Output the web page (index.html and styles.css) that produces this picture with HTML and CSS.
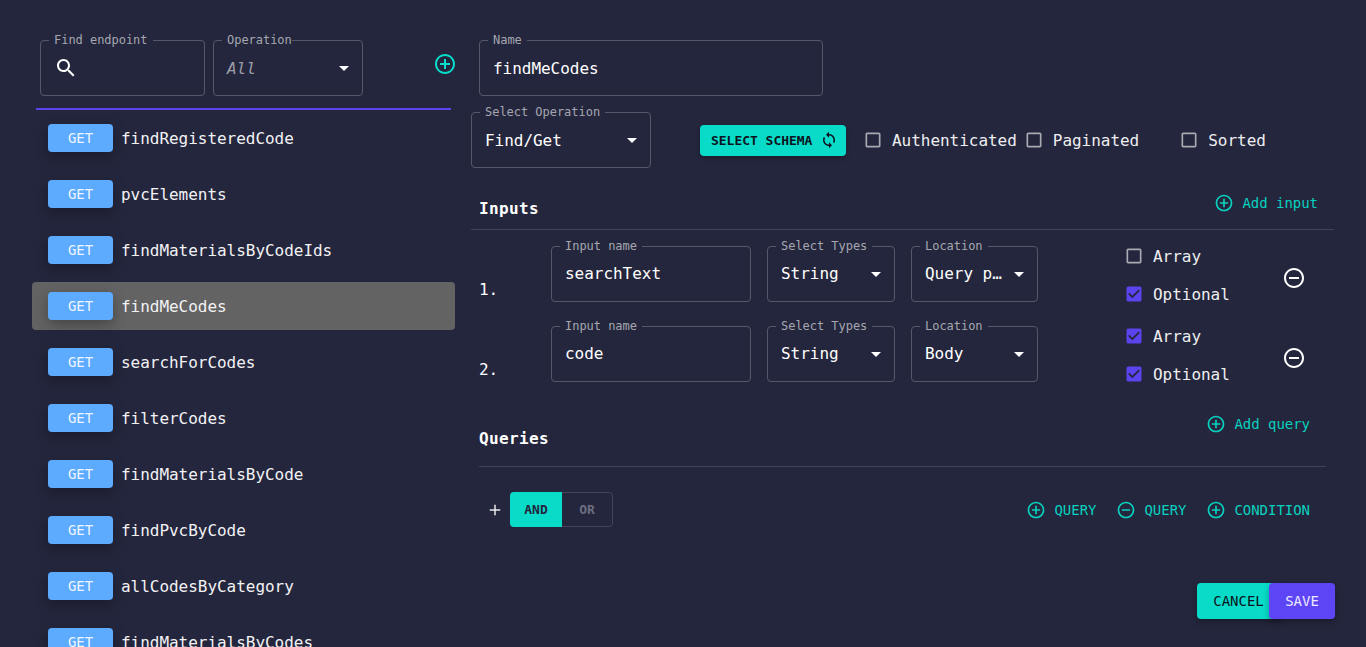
FILE: index.html
```html
<!DOCTYPE html>
<html lang="en">
<head>
    <meta charset="UTF-8">
    <meta name="viewport" content="width=device-width, initial-scale=1.0">
    <title>Endpoints</title>
    <link rel="stylesheet" href="styles.css">
</head>
<body>
    <svg class="sprites" aria-hidden="true">
        <symbol id="i-add" viewBox="0 0 24 24"><path d="M13 7h-2v4H7v2h4v4h2v-4h4v-2h-4V7zm-1-5C6.48 2 2 6.48 2 12s4.48 10 10 10 10-4.48 10-10S17.52 2 12 2zm0 18c-4.41 0-8-3.59-8-8s3.59-8 8-8 8 3.59 8 8-3.59 8-8 8z"/></symbol>
        <symbol id="i-remove" viewBox="0 0 24 24"><path d="M7 11v2h10v-2H7zm5-9C6.48 2 2 6.48 2 12s4.48 10 10 10 10-4.48 10-10S17.52 2 12 2zm0 18c-4.41 0-8-3.59-8-8s3.59-8 8-8 8 3.59 8 8-3.59 8-8 8z"/></symbol>
        <symbol id="i-search" viewBox="0 0 24 24"><path d="M15.5 14h-.79l-.28-.27C15.41 12.59 16 11.11 16 9.5 16 5.91 13.09 3 9.5 3S3 5.91 3 9.5 5.91 16 9.5 16c1.61 0 3.09-.59 4.23-1.57l.27.28v.79l5 4.99L20.49 19l-4.99-5zm-6 0C7.01 14 5 11.99 5 9.5S7.01 5 9.5 5 14 7.01 14 9.5 11.99 14 9.5 14z"/></symbol>
        <symbol id="i-sync" viewBox="0 0 24 24"><path d="M12 4V1L8 5l4 4V6c3.31 0 6 2.69 6 6 0 1.01-.25 1.97-.7 2.8l1.46 1.46C19.54 15.03 20 13.57 20 12c0-4.42-3.58-8-8-8zm0 14c-3.31 0-6-2.69-6-6 0-1.01.25-1.97.7-2.8L5.24 7.74C4.46 8.97 4 10.43 4 12c0 4.42 3.58 8 8 8v3l4-4-4-4v3z"/></symbol>
        <symbol id="i-drop" viewBox="0 0 24 24"><path d="M7 10l5 5 5-5z"/></symbol>
        <symbol id="i-plus" viewBox="0 0 24 24"><path d="M19 13h-6v6h-2v-6H5v-2h6V5h2v6h6v2z"/></symbol>
        <symbol id="i-box" viewBox="0 0 24 24"><path d="M19 5v14H5V5h14m0-2H5c-1.1 0-2 .9-2 2v14c0 1.1.9 2 2 2h14c1.1 0 2-.9 2-2V5c0-1.1-.9-2-2-2z"/></symbol>
        <symbol id="i-checked" viewBox="0 0 24 24"><path d="M19 3H5c-1.11 0-2 .9-2 2v14c0 1.1.89 2 2 2h14c1.11 0 2-.9 2-2V5c0-1.1-.89-2-2-2zm-9 14l-5-5 1.41-1.41L10 14.17l7.59-7.59L19 8l-9 9z"/></symbol>
    </svg>

    <div class="page">
        <aside class="sidebar">
            <div class="filters">
                <div class="field field-find">
                    <span class="field-label">Find endpoint</span>
                    <svg class="icon-24 search-icon"><use href="#i-search"/></svg>
                </div>
                <div class="field field-operation">
                    <span class="field-label label-tight">Operation</span>
                    <span class="field-value placeholder">All</span>
                    <svg class="icon-24 drop"><use href="#i-drop"/></svg>
                </div>
                <svg class="icon-24 teal new-endpoint"><use href="#i-add"/></svg>
            </div>
            <ul class="endpoints">
                <li class="endpoint"><span class="badge">GET</span>findRegisteredCode</li>
                <li class="endpoint"><span class="badge">GET</span>pvcElements</li>
                <li class="endpoint"><span class="badge">GET</span>findMaterialsByCodeIds</li>
                <li class="endpoint selected"><span class="badge">GET</span>findMeCodes</li>
                <li class="endpoint"><span class="badge">GET</span>searchForCodes</li>
                <li class="endpoint"><span class="badge">GET</span>filterCodes</li>
                <li class="endpoint"><span class="badge">GET</span>findMaterialsByCode</li>
                <li class="endpoint"><span class="badge">GET</span>findPvcByCode</li>
                <li class="endpoint"><span class="badge">GET</span>allCodesByCategory</li>
                <li class="endpoint"><span class="badge">GET</span>findMaterialsByCodes</li>
            </ul>
        </aside>

        <main class="editor">
            <div class="field field-name">
                <span class="field-label">Name</span>
                <span class="field-value">findMeCodes</span>
            </div>

            <div class="settings">
                <div class="field field-select-op">
                    <span class="field-label">Select Operation</span>
                    <span class="field-value">Find/Get</span>
                    <svg class="icon-24 drop"><use href="#i-drop"/></svg>
                </div>
                <button class="btn-schema">SELECT SCHEMA<svg class="icon-18"><use href="#i-sync"/></svg></button>
                <label class="check check-auth"><svg class="icon-20 box"><use href="#i-box"/></svg>Authenticated</label>
                <label class="check check-paged"><svg class="icon-20 box"><use href="#i-box"/></svg>Paginated</label>
                <label class="check check-sorted"><svg class="icon-20 box"><use href="#i-box"/></svg>Sorted</label>
            </div>

            <div class="section-head inputs-head">
                <h3>Inputs</h3>
                <a class="add-link"><svg class="icon-20"><use href="#i-add"/></svg>Add input</a>
            </div>

            <div class="input-row">
                <span class="row-num">1.</span>
                <div class="field field-input">
                    <span class="field-label">Input name</span>
                    <span class="field-value">searchText</span>
                </div>
                <div class="field field-types">
                    <span class="field-label">Select Types</span>
                    <span class="field-value">String</span>
                    <svg class="icon-24 drop"><use href="#i-drop"/></svg>
                </div>
                <div class="field field-location">
                    <span class="field-label">Location</span>
                    <span class="field-value">Query p…</span>
                    <svg class="icon-24 drop"><use href="#i-drop"/></svg>
                </div>
                <div class="row-checks">
                    <label class="check"><svg class="icon-20 box"><use href="#i-box"/></svg>Array</label>
                    <label class="check"><svg class="icon-20 purple"><use href="#i-checked"/></svg>Optional</label>
                </div>
                <svg class="icon-24 row-remove"><use href="#i-remove"/></svg>
            </div>

            <div class="input-row">
                <span class="row-num">2.</span>
                <div class="field field-input">
                    <span class="field-label">Input name</span>
                    <span class="field-value">code</span>
                </div>
                <div class="field field-types">
                    <span class="field-label">Select Types</span>
                    <span class="field-value">String</span>
                    <svg class="icon-24 drop"><use href="#i-drop"/></svg>
                </div>
                <div class="field field-location">
                    <span class="field-label">Location</span>
                    <span class="field-value">Body</span>
                    <svg class="icon-24 drop"><use href="#i-drop"/></svg>
                </div>
                <div class="row-checks">
                    <label class="check"><svg class="icon-20 purple"><use href="#i-checked"/></svg>Array</label>
                    <label class="check"><svg class="icon-20 purple"><use href="#i-checked"/></svg>Optional</label>
                </div>
                <svg class="icon-24 row-remove"><use href="#i-remove"/></svg>
            </div>

            <div class="section-head queries-head">
                <h3>Queries</h3>
                <a class="add-link"><svg class="icon-20"><use href="#i-add"/></svg>Add query</a>
            </div>

            <div class="query-bar">
                <svg class="icon-18 query-plus"><use href="#i-plus"/></svg>
                <div class="toggle">
                    <span class="toggle-on">AND</span>
                    <span class="toggle-off">OR</span>
                </div>
                <div class="query-actions">
                    <a class="add-link"><svg class="icon-20"><use href="#i-add"/></svg>QUERY</a>
                    <a class="add-link"><svg class="icon-20"><use href="#i-remove"/></svg>QUERY</a>
                    <a class="add-link"><svg class="icon-20"><use href="#i-add"/></svg>CONDITION</a>
                </div>
            </div>

            <div class="footer-actions">
                <button class="btn-cancel">CANCEL</button>
                <button class="btn-save">SAVE</button>
            </div>
        </main>
    </div>
</body>
</html>
```

FILE: styles.css
```css
* {
    box-sizing: border-box;
}
html, body {
    height: 100%;
}
body {
    margin: 0;
    overflow: hidden;
    background: #24263d;
    color: #fff;
    font-family: "DejaVu Sans Mono", "Liberation Mono", monospace;
    font-size: 16px;
    letter-spacing: -0.002em;
}
.sprites {
    display: none;
}
svg {
    flex: none;
    fill: currentColor;
}
.icon-24 { width: 24px; height: 24px; }
.icon-20 { width: 20px; height: 20px; }
.icon-18 { width: 18px; height: 18px; }
.teal { color: #08dcc8; }
.purple { color: #5b43ee; }
.box { color: #a9a9b1; }

.page {
    display: flex;
    height: 647px;
    overflow: hidden;
}

/* left column */
.sidebar {
    width: 439px;
    margin-left: 32px;
    flex: none;
}
.filters {
    display: flex;
    gap: 8px;
    margin: 40px 0 0 8px;
    height: 56px;
}
.new-endpoint {
    margin: 12px 0 0 62px;
}
.endpoints {
    display: flex;
    flex-direction: column;
    gap: 8px;
    list-style: none;
    width: 423px;
    margin: 12px 0 0;
    padding: 6px 0 0;
    position: relative;
}
.endpoints::before {
    content: "";
    position: absolute;
    top: 0;
    left: 4px;
    right: 4px;
    height: 2px;
    background: #5b43ee;
}
.endpoint {
    display: flex;
    align-items: center;
    flex: none;
    height: 48px;
    padding-left: 16px;
    border-radius: 4px;
    color: #f2f2f4;
}
.endpoint.selected {
    background: #636363;
}
.badge {
    width: 65px;
    height: 28px;
    margin-right: 8px;
    border-radius: 4px;
    background: #5dabff;
    color: #eef5ff;
    font-size: 14px;
    line-height: 28px;
    text-align: center;
    box-shadow: 0 5px 14px rgba(0, 0, 0, .3);
}

/* outlined fields */
.field {
    position: relative;
    display: flex;
    align-items: center;
    height: 56px;
    padding: 0 13px;
    border: 1px solid #56586a;
    border-radius: 4px;
    flex: none;
}
.field-label {
    position: absolute;
    top: -8px;
    left: 8px;
    padding: 0 5px;
    background: #24263d;
    color: #a5a6b0;
    font-size: 12px;
    line-height: 14px;
}
.label-tight {
    padding-right: 0;
}
.field-value {
    flex: 1;
    min-width: 0;
    white-space: nowrap;
}
.placeholder {
    color: #9c9da8;
    font-style: italic;
}
.drop {
    margin-right: -7px;
}
.field-find { width: 165px; }
.field-operation { width: 150px; }
.field-name { width: 344px; margin-left: 8px; }
.field-select-op { width: 180px; }
.field-input { width: 200px; }
.field-types { width: 128px; }
.field-location { width: 127px; }

/* right column */
.editor {
    flex: none;
    width: 863px;
    padding-top: 40px;
}
.settings {
    display: flex;
    align-items: center;
    margin-top: 16px;
}
.btn-schema {
    display: flex;
    align-items: center;
    gap: 8px;
    height: 31px;
    width: 146px;
    margin-left: 49px;
    padding: 0 0 0 11px;
    border: 0;
    border-radius: 4px;
    background: #08dcc8;
    color: #0c1220;
    font: 600 13px "DejaVu Sans Mono", monospace;
    letter-spacing: -0.002em;
    box-shadow: 0 2px 4px rgba(0, 0, 0, .3);
}
.check {
    display: flex;
    align-items: center;
    gap: 9px;
    color: #eeeef0;
}
.check-auth { margin-left: 17px; }
.check-paged { margin-left: 7px; }
.check-sorted { margin-left: 40px; }

.section-head {
    display: flex;
    justify-content: space-between;
}
h3 {
    margin: 0;
    font-size: 16px;
    font-weight: 700;
    letter-spacing: .37px;
}
.add-link {
    display: flex;
    align-items: center;
    gap: 8px;
    color: #08d2bf;
    font-size: 14px;
}
.inputs-head {
    height: 38px;
    margin-top: 24px;
    padding: 0 16px 0 8px;
    border-bottom: 1px solid #41435a;
}
.inputs-head h3 {
    padding-top: 7px;
}
.inputs-head .add-link {
    height: 22px;
}
.input-row {
    display: flex;
    height: 56px;
    gap: 16px;
    margin-top: 24px;
    padding-left: 8px;
}
.inputs-head + .input-row {
    margin-top: 16px;
}
.input-row .field-value {
    margin-bottom: 2px;
}
.row-num {
    flex: none;
    width: 56px;
    margin-top: 34px;
    line-height: 20px;
}
.row-checks {
    display: flex;
    flex-direction: column;
    gap: 18px;
    flex: none;
    width: 132px;
    margin-left: 70px;
}
.row-remove {
    margin: 20px 0 0 10px;
}

.queries-head {
    height: 59px;
    margin: 26px 8px 0;
    padding-right: 16px;
    border-bottom: 1px solid #41435a;
}
.queries-head h3 {
    padding-top: 21px;
}
.queries-head .add-link {
    height: 20px;
    margin-top: 6px;
}
.query-bar {
    display: flex;
    align-items: center;
    height: 36px;
    margin-top: 24px;
    padding: 0 24px 0 15px;
}
.query-plus {
    margin-top: 1px;
    color: #e8e8ec;
}
.toggle {
    display: flex;
    height: 35px;
    width: 103px;
    margin-left: 6px;
    border: 1px solid #41435a;
    border-radius: 4px;
    font-size: 13px;
    font-weight: 600;
    line-height: 33px;
    text-align: center;
}
.toggle-on {
    width: 52px;
    margin: -1px 0 -1px -1px;
    border-radius: 4px 0 0 4px;
    background: #08dcc8;
    color: #24263d;
    line-height: 35px;
}
.toggle-off {
    flex: 1;
    color: #6c6e80;
}
.query-actions {
    display: flex;
    gap: 20px;
    margin: 1px 0 0 auto;
}
.footer-actions {
    display: flex;
    justify-content: flex-end;
    margin-top: 56px;
}
.footer-actions button {
    height: 36px;
    border: 0;
    border-radius: 4px;
    font: 500 14px "DejaVu Sans Mono", monospace;
    letter-spacing: -0.002em;
    box-shadow: 0 3px 6px rgba(0, 0, 0, .3);
}
.btn-cancel {
    width: 83px;
    background: #08dcc8;
    color: #0c1220;
}
.btn-save {
    width: 66px;
    margin: 0 -1px 0 -11px;
    background: #5d45f5;
    color: #eceaff;
    position: relative;
}
```
